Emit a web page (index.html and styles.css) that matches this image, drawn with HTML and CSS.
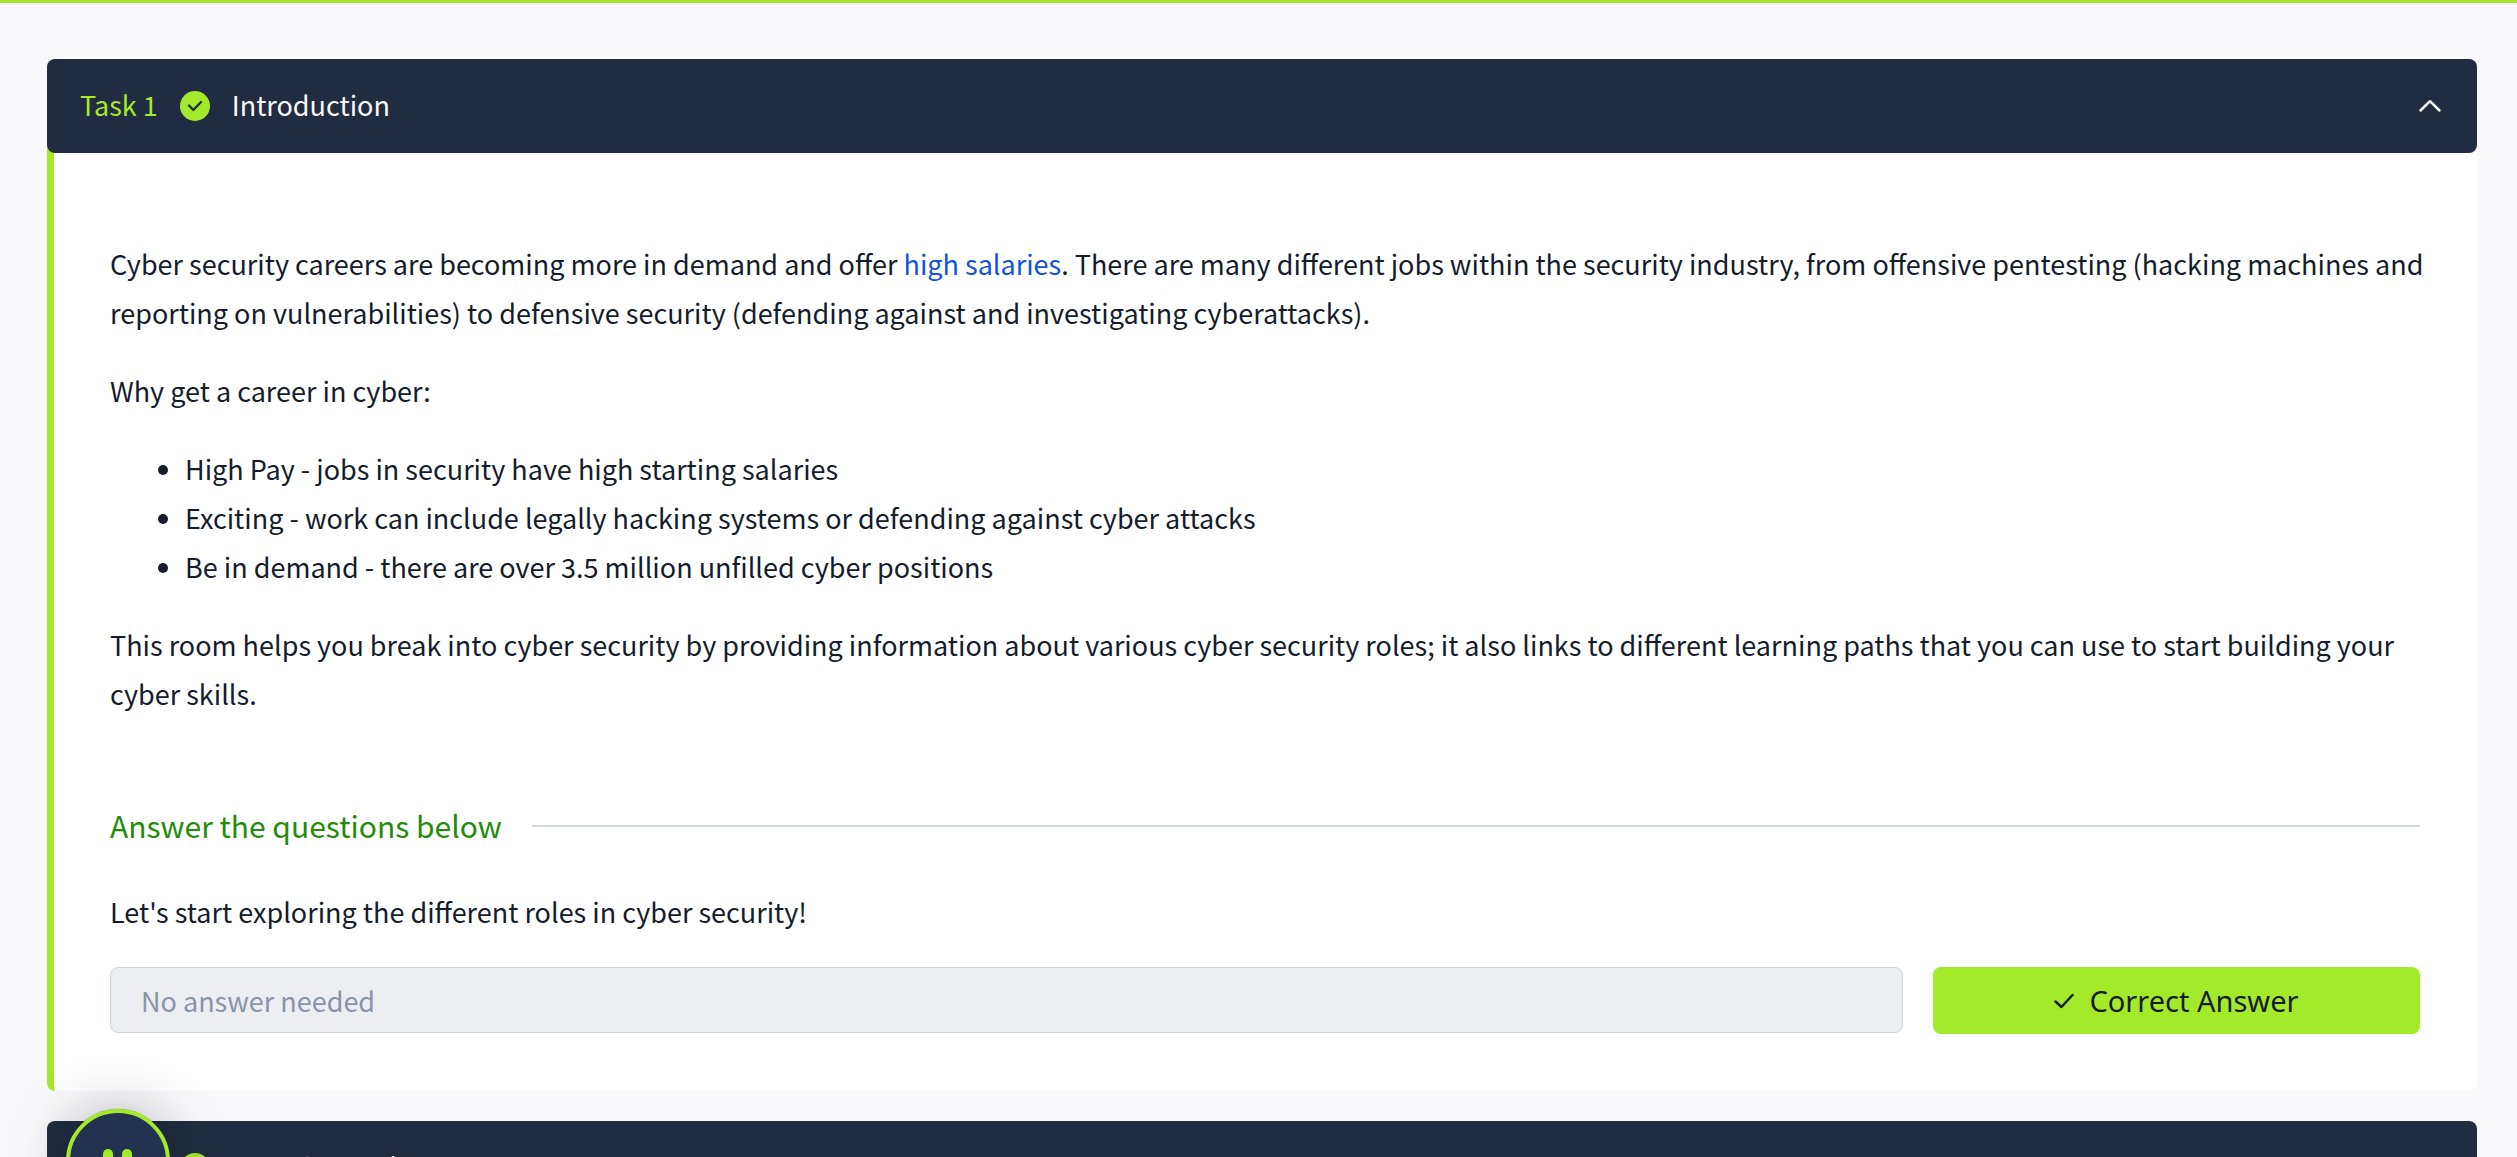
FILE: index.html
```html
<!DOCTYPE html>
<html lang="en">
<head>
<meta charset="utf-8">
<meta name="viewport" content="width=device-width, initial-scale=1">
<title>Careers in Cyber</title>
<link rel="stylesheet" href="styles.css">
</head>
<body>
<main class="tasks">
  <section class="task">
    <button class="task-header" type="button" aria-expanded="true">
      <span class="task-number">Task 1</span>
      <svg class="badge" viewBox="0 0 30 30" aria-hidden="true"><circle cx="15" cy="15" r="15"/><path d="M9 14.500l4.300 4.500 7.700-8"/></svg>
      <span class="task-title">Introduction</span>
      <svg class="chevron" viewBox="0 0 24 14" aria-hidden="true"><path d="M2.500 11.500L12 2.200l9.500 9.300"/></svg>
    </button>
    <div class="task-body">
      <div class="lesson">
        <p>Cyber security careers are becoming more in demand and offer <a href="#salaries">high salaries</a>. There are many different jobs within the security industry, from offensive pentesting (hacking machines and reporting on vulnerabilities) to defensive security (defending against and investigating cyberattacks).</p>
        <p>Why get a career in cyber:</p>
        <ul>
          <li>High Pay - jobs in security have high starting salaries</li>
          <li>Exciting - work can include legally hacking systems or defending against cyber attacks</li>
          <li>Be in demand - there are over 3.5 million unfilled cyber positions</li>
        </ul>
        <p>This room helps you break into cyber security by providing information about various cyber security roles; it also links to different learning paths that you can use to start building your cyber skills.</p>
      </div>
      <div class="questions">
        <h2 class="questions-title">Answer the questions below</h2>
        <label class="question" for="answer">Let's start exploring the different roles in cyber security!</label>
        <form class="answer-row">
          <input id="answer" type="text" placeholder="No answer needed" disabled>
          <button class="submit" type="button">
            <svg viewBox="0 0 20 16" aria-hidden="true"><path d="M1.500 8.500l6 5.500L18.500 2"/></svg>
            Correct Answer
          </button>
        </form>
      </div>
    </div>
  </section>
  <section class="task">
    <button class="task-header" type="button" aria-expanded="false">
      <span class="task-number">Task 2</span>
      <svg class="badge" viewBox="0 0 30 30" aria-hidden="true"><circle cx="15" cy="15" r="15"/><path d="M9 14.500l4.300 4.500 7.700-8"/></svg>
      <span class="task-title">Security Analyst</span>
      <svg class="chevron chevron-down" viewBox="0 0 24 14" aria-hidden="true"><path d="M2.500 11.500L12 2.200l9.500 9.300"/></svg>
    </button>
  </section>
</main>
<button class="assistant" type="button" aria-label="Open assistant">
  <svg viewBox="0 0 96 96" aria-hidden="true"><rect x="33" y="36" width="10" height="18" rx="5"/><rect x="52" y="36" width="10" height="18" rx="5"/></svg>
</button>
</body>
</html>
```

FILE: styles.css
```css
* { box-sizing: border-box; }

html, body { height: 100%; }

body {
  margin: 0;
  overflow: hidden;
  border-top: 3px solid #a3ea2a;
  background: #f9f9fb;
  color: #151c2b;
  font: 27px/49px "Noto Sans CJK JP", "Source Sans Pro", sans-serif;
}

button, input { font: inherit; }

.tasks {
  display: flex;
  flex-direction: column;
  gap: 30px;
  padding: 56px 40px 56px 47px;
}

.task-header {
  position: relative;
  display: flex;
  align-items: center;
  gap: 22px;
  width: 100%;
  height: 94px;
  padding: 0 35px 0 33px;
  border: 0;
  border-radius: 8px;
  background: #212c42;
  color: #f9f9fb;
  cursor: pointer;
}

.task-number, .task-title { padding-bottom: 3px; }
.task-number { color: #a3ea2a; }

.badge { width: 30px; height: 30px; }
.badge circle { fill: #a3ea2a; }
.badge path { fill: none; stroke: #212c42; stroke-width: 2.400; stroke-linecap: round; stroke-linejoin: round; }

.chevron {
  width: 24px;
  height: 14px;
  margin-left: auto;
  fill: none;
  stroke: #f9f9fb;
  stroke-width: 2.500;
  stroke-linecap: round;
  stroke-linejoin: round;
}
.chevron-down { transform: rotate(180deg); }

.task-body {
  margin-top: -8px;
  padding: 94px 48px 57px 56px;
  border-left: 7px solid #a3ea2a;
  border-radius: 0 0 8px 8px;
  background: #fff;
}

.lesson p, .lesson ul { margin: 0 0 29px; }
.lesson ul { padding-left: 75px; }
.lesson a { color: #1052e2; text-decoration: none; }

.questions { padding: 54px 9px 0 0; }

.questions-title {
  display: flex;
  align-items: center;
  gap: 30px;
  margin: 0 0 37px;
  color: #258c0b;
  font-size: 30px;
  font-weight: 400;
}
.questions-title::after {
  content: "";
  flex: 1;
  height: 2px;
  background: #d4d8e1;
}

.question { display: block; margin-bottom: 31px; }

.answer-row {
  display: grid;
  grid-template-columns: 1793fr 487fr;
  gap: 30px;
  margin: 0;
}

.answer-row input {
  width: 100%;
  height: 66px;
  padding: 0 30px;
  border: 1px solid #d0d4dd;
  border-radius: 8px;
  background: #edeef2;
}
.answer-row input::placeholder { color: #8a93a8; opacity: 1; }

.submit {
  display: flex;
  align-items: center;
  justify-content: center;
  gap: 15px;
  height: 67px;
  border: 0;
  border-radius: 8px;
  background: #a3ea2a;
  color: #151c2b;
  font-family: "Noto Sans", sans-serif;
  font-size: 29px;
}
.submit svg {
  width: 20px;
  height: 16px;
  fill: none;
  stroke: #151c2b;
  stroke-width: 2.500;
  stroke-linecap: round;
  stroke-linejoin: round;
}

/* Floating helper, partly below the fold */
.assistant {
  position: fixed;
  left: 66px;
  bottom: -56px;
  width: 104px;
  height: 104px;
  padding: 0;
  border: 4px solid #a3ea2a;
  border-radius: 50%;
  background: #213351;
  box-shadow: 0 0 1px rgba(0, 0, 0, 0.600), 0 2px 60px rgba(0, 0, 0, 0.300);
}
.assistant svg { display: block; width: 100%; fill: #a3ea2a; }
```
